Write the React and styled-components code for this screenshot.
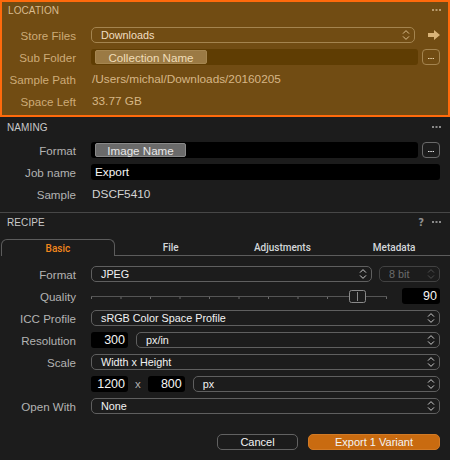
import React from "react";
import styled, { createGlobalStyle, css } from "styled-components";

const GlobalStyle = createGlobalStyle`
  html, body { margin: 0; padding: 0; background: #1c1c1c; }
  body { font-family: "Liberation Sans", Arial, sans-serif; -webkit-font-smoothing: antialiased; }
`;

const Panel = styled.div`
  width: 450px;
  height: 460px;
  background: #1c1c1c;
  overflow: hidden;
  display: flex;
  flex-direction: column;
`;

const LocationSection = styled.section`
  box-sizing: border-box;
  height: 117px;
  border: 2px solid #ff6a0c;
  background: #714c13;
  padding-bottom: 3px;
  display: flex;
  flex-direction: column;
`;

const PlainSection = styled.section`
  box-sizing: border-box;
  display: flex;
  flex-direction: column;
  ${(p) => p.$divider && css`border-bottom: 1px solid #474747;`}
  padding-bottom: ${(p) => p.$padBottom || 0}px;
`;

const SectionHeader = styled.header`
  display: flex;
  align-items: center;
  justify-content: space-between;
  height: ${(p) => p.$height}px;
  padding: 0 ${(p) => (p.$loc ? 7 : 9)}px 0 ${(p) => (p.$loc ? 6 : 7)}px;
  flex-shrink: 0;
`;

const HeaderTitle = styled.span`
  font-size: 10px;
  letter-spacing: 0.1px;
  color: ${(p) => (p.$loc ? "#d8bb8e" : "#c9c9c9")};
`;

const HeaderIcons = styled.div`
  display: flex;
  align-items: center;
  gap: 8px;
`;

const Help = styled.span`
  font-family: "DejaVu Sans", sans-serif;
  font-weight: bold;
  font-size: 10px;
  color: #8f8f8f;
`;

const Rows = styled.div`
  display: flex;
  flex-direction: column;
  padding-top: ${(p) => p.$top || 0}px;
  padding-right: ${(p) => (p.$loc ? 8 : 10)}px;
`;

const Row = styled.div`
  display: flex;
  align-items: center;
  height: 22px;
`;

const Label = styled.span`
  box-sizing: border-box;
  width: ${(p) => (p.$loc ? 74 : 76)}px;
  flex-shrink: 0;
  text-align: right;
  font-size: 11.6px;
  color: ${(p) => (p.$loc ? "#cdab78" : "#b3b3b3")};
`;

const Controls = styled.div`
  flex: 1;
  display: flex;
  align-items: center;
  gap: ${(p) => p.$gap ?? 7}px;
  margin-left: 15px;
  min-width: 0;
`;

const Value = styled.span`
  font-size: 11.8px;
  margin-left: 1px;
  color: ${(p) => (p.$loc ? "#d6b686" : "#d4d4d4")};
`;

const PopupBox = styled.div`
  box-sizing: border-box;
  height: 16px;
  flex: ${(p) => (p.$width ? "0 0 auto" : 1)};
  width: ${(p) => (p.$width ? `${p.$width}px` : "auto")};
  display: flex;
  align-items: center;
  justify-content: space-between;
  padding: 0 4px 0 9px;
  border: 1px solid ${(p) => (p.$loc ? "#a4844f" : p.$dim ? "#424242" : "#5f5f5f")};
  border-radius: 5px;
  font-size: 10.8px;
  color: ${(p) => (p.$loc ? "#f1dfc2" : p.$dim ? "#6c6c6c" : "#f2f2f2")};
`;

const ChevronSvg = styled.svg`
  width: 8px;
  height: 12px;
  flex-shrink: 0;
  color: ${(p) => (p.$loc ? "#dcbf8e" : p.$dim ? "#4e4e4e" : "#cfcfcf")};
`;

const Chevrons = ({ loc, dim }) => (
  <ChevronSvg viewBox="0 0 8 12" $loc={loc} $dim={dim}>
    <path d="M1 4.6 L4 1.6 L7 4.6 M1 7.4 L4 10.4 L7 7.4" fill="none" stroke="currentColor" strokeWidth="1" />
  </ChevronSvg>
);

const Popup = ({ children, loc, dim, width }) => (
  <PopupBox $loc={loc} $dim={dim} $width={width}>
    <span>{children}</span>
    <Chevrons loc={loc} dim={dim} />
  </PopupBox>
);

const Field = styled.div`
  box-sizing: border-box;
  height: 16px;
  flex: 1;
  display: flex;
  align-items: center;
  padding: 0 4px;
  border-radius: 3px;
  background: ${(p) => (p.$loc ? "#5f3d03" : "#000")};
  font-size: 11.8px;
  color: #f5f5f5;
`;

const Token = styled.span`
  box-sizing: border-box;
  height: 14px;
  width: ${(p) => p.$width}px;
  display: inline-flex;
  align-items: center;
  justify-content: center;
  border-radius: 2px;
  font-size: 11.6px;
  background: ${(p) => (p.$loc ? "#9b7a44" : "#6a6a6a")};
  color: ${(p) => (p.$loc ? "#f0ddb8" : "#e8e8e8")};
  border: 1px solid ${(p) => (p.$loc ? "#a68650" : "#8a8a8a")};
`;

const SmallButton = styled.div`
  box-sizing: border-box;
  width: 18px;
  height: 16px;
  flex-shrink: 0;
  border: 1px solid ${(p) => (p.$loc ? "#a4844f" : "#6a6a6a")};
  border-radius: 4px;
  display: flex;
  align-items: flex-end;
  justify-content: center;
  padding-bottom: 5px;
`;

const DotsSvg = styled.svg`
  display: block;
  width: ${(p) => p.$w}px;
  height: ${(p) => p.$h}px;
`;

const Dots = ({ color = "#8a8a8a", size = 2, gap = 1.5 }) => {
  const w = size * 3 + gap * 2;
  return (
    <DotsSvg $w={w} $h={size} viewBox={`0 0 ${w} ${size}`}>
      {[0, 1, 2].map((i) => (
        <rect key={i} x={i * (size + gap)} y="0" width={size} height={size} fill={color} />
      ))}
    </DotsSvg>
  );
};

const ArrowSvg = styled.svg`
  width: 12px;
  height: 10px;
  flex-shrink: 0;
  margin-left: 6px;
`;

const NumberField = styled.div`
  box-sizing: border-box;
  width: ${(p) => p.$width || 37}px;
  height: 16px;
  flex-shrink: 0;
  background: #000;
  border-radius: 3px;
  display: flex;
  align-items: center;
  justify-content: flex-end;
  padding-right: 3px;
  font-size: 12.5px;
  color: #f5f5f5;
`;

const Times = styled.span`
  font-size: 11.5px;
  color: #b0b0b0;
  margin: 0 -1px;
`;

const SliderSvg = styled.svg`
  display: block;
  flex: 1;
  height: 16px;
`;

const Slider = () => {
  const ticks = Array.from({ length: 11 }, (_, i) => i * 29.5);
  return (
    <SliderSvg viewBox="0 0 304 16" preserveAspectRatio="none">
      <line x1="0" y1="8.5" x2="296" y2="8.5" stroke="#555" strokeWidth="1" />
      {ticks.map((t) => (
        <line key={t} x1={t + 0.5} y1="9" x2={t + 0.5} y2="11" stroke="#6a6a6a" strokeWidth="1" />
      ))}
      <rect x="258.5" y="2.5" width="16" height="12" rx="2" fill="#1c1c1c" stroke="#8a8a8a" strokeWidth="1" />
      <line x1="266.5" y1="4" x2="266.5" y2="13" stroke="#8a8a8a" strokeWidth="1" />
    </SliderSvg>
  );
};

const TabBar = styled.div`
  display: flex;
  height: 17px;
  margin-top: 8px;
  padding-left: 1px;
`;

const Tab = styled.div`
  box-sizing: border-box;
  flex: 1;
  display: flex;
  align-items: center;
  justify-content: center;
  font-family: Roboto, "DejaVu Sans", sans-serif;
  font-weight: 500;
  font-size: 10px;
  color: ${(p) => (p.$active ? "#f2861c" : "#d3d7da")};
  ${(p) =>
    p.$active
      ? css`
          border: 1px solid #5c5c5c;
          border-bottom: none;
          border-radius: 6px 6px 0 0;
        `
      : css`
          border-bottom: 1px solid #5c5c5c;
        `}
`;

const Footer = styled.div`
  display: flex;
  justify-content: flex-end;
  gap: 10px;
  margin-top: 17px;
  padding-right: 10px;
`;

const Button = styled.div`
  box-sizing: border-box;
  height: 16px;
  width: ${(p) => p.$width}px;
  display: flex;
  align-items: center;
  justify-content: center;
  border-radius: 5px;
  font-size: 11px;
  color: #f4f4f4;
  ${(p) =>
    p.$primary
      ? css`
          background: #c96b10;
          border: 1px solid #d27a25;
        `
      : css`
          background: #1c1c1c;
          border: 1px solid #626262;
        `}
`;

export default function App() {
  return (
    <>
      <GlobalStyle />
      <Panel>
        <LocationSection>
          <SectionHeader $loc $height={16}>
            <HeaderTitle $loc>LOCATION</HeaderTitle>
            <Dots color="#b89a6c" />
          </SectionHeader>
          <Rows $loc $top={6}>
            <Row>
              <Label $loc>Store Files</Label>
              <Controls $gap={7}>
                <Popup loc>Downloads</Popup>
                <ArrowSvg viewBox="0 0 12 10">
                  <path d="M0 3 H6 V0 L12 5 L6 10 V7 H0 Z" fill="#d9b377" />
                </ArrowSvg>
              </Controls>
            </Row>
            <Row>
              <Label $loc>Sub Folder</Label>
              <Controls $gap={4}>
                <Field $loc>
                  <Token $loc $width={112}>Collection Name</Token>
                </Field>
                <SmallButton $loc>
                  <Dots color="#e9d2a8" size={1.5} gap={0.8} />
                </SmallButton>
              </Controls>
            </Row>
            <Row>
              <Label $loc>Sample Path</Label>
              <Controls>
                <Value $loc>/Users/michal/Downloads/20160205</Value>
              </Controls>
            </Row>
            <Row>
              <Label $loc>Space Left</Label>
              <Controls>
                <Value $loc>33.77 GB</Value>
              </Controls>
            </Row>
          </Rows>
        </LocationSection>

        <PlainSection $divider $padBottom={7}>
          <SectionHeader $height={20}>
            <HeaderTitle>NAMING</HeaderTitle>
            <Dots />
          </SectionHeader>
          <Rows $top={2}>
            <Row>
              <Label>Format</Label>
              <Controls $gap={4}>
                <Field>
                  <Token $width={91}>Image Name</Token>
                </Field>
                <SmallButton>
                  <Dots color="#e6e6e6" size={1.5} gap={0.8} />
                </SmallButton>
              </Controls>
            </Row>
            <Row>
              <Label>Job name</Label>
              <Controls>
                <Field>Export</Field>
              </Controls>
            </Row>
            <Row>
              <Label>Sample</Label>
              <Controls>
                <Value>DSCF5410</Value>
              </Controls>
            </Row>
          </Rows>
        </PlainSection>

        <PlainSection>
          <SectionHeader $height={18}>
            <HeaderTitle>RECIPE</HeaderTitle>
            <HeaderIcons>
              <Help>?</Help>
              <Dots />
            </HeaderIcons>
          </SectionHeader>
          <TabBar>
            <Tab $active>Basic</Tab>
            <Tab>File</Tab>
            <Tab>Adjustments</Tab>
            <Tab>Metadata</Tab>
          </TabBar>
          <Rows $top={7}>
            <Row>
              <Label>Format</Label>
              <Controls>
                <Popup>JPEG</Popup>
                <Popup dim width={61}>8 bit</Popup>
              </Controls>
            </Row>
            <Row>
              <Label>Quality</Label>
              <Controls>
                <Slider />
                <NumberField $width={38}>90</NumberField>
              </Controls>
            </Row>
            <Row>
              <Label>ICC Profile</Label>
              <Controls>
                <Popup>sRGB Color Space Profile</Popup>
              </Controls>
            </Row>
            <Row>
              <Label>Resolution</Label>
              <Controls $gap={8}>
                <NumberField>300</NumberField>
                <Popup>px/in</Popup>
              </Controls>
            </Row>
            <Row>
              <Label>Scale</Label>
              <Controls>
                <Popup>Width x Height</Popup>
              </Controls>
            </Row>
            <Row>
              <Label />
              <Controls $gap={8}>
                <NumberField>1200</NumberField>
                <Times>x</Times>
                <NumberField>800</NumberField>
                <Popup>px</Popup>
              </Controls>
            </Row>
            <Row>
              <Label>Open With</Label>
              <Controls>
                <Popup>None</Popup>
              </Controls>
            </Row>
          </Rows>
          <Footer>
            <Button $width={81}>Cancel</Button>
            <Button $primary $width={132}>Export 1 Variant</Button>
          </Footer>
        </PlainSection>
      </Panel>
    </>
  );
}
